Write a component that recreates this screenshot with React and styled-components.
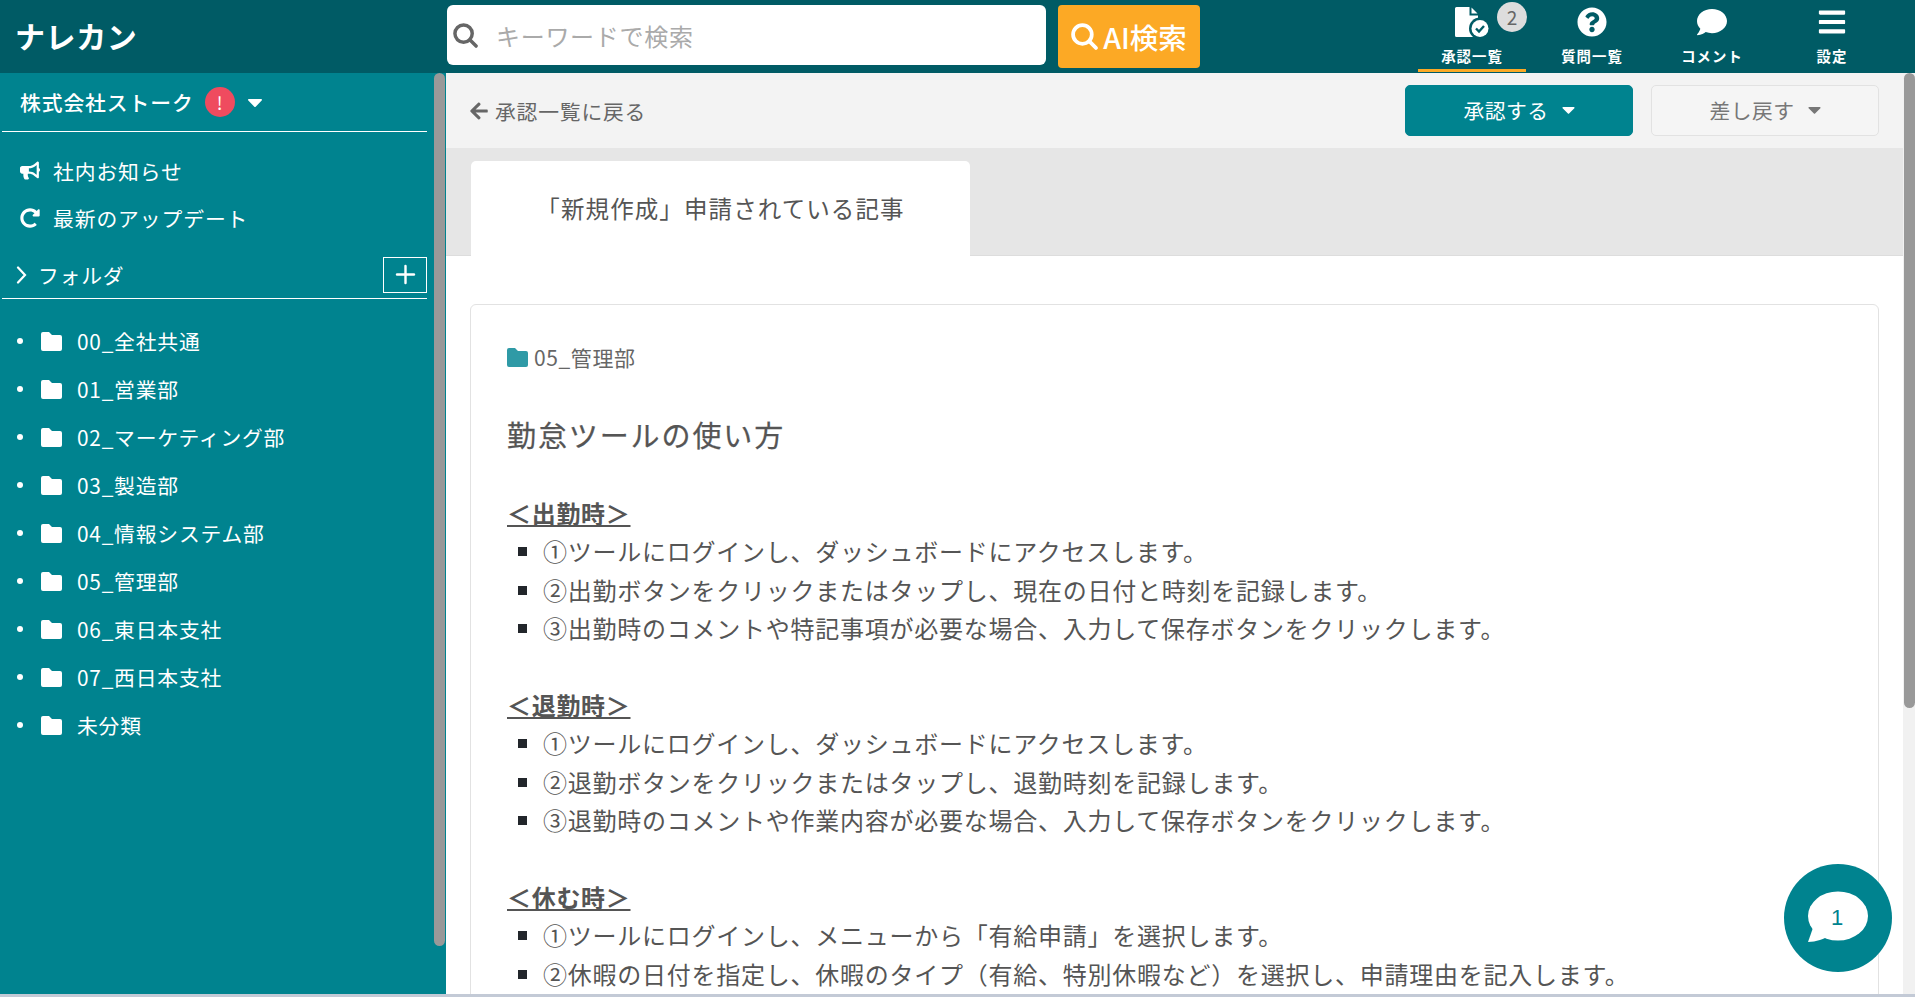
import React from 'react';
import styled, { createGlobalStyle } from 'styled-components';
import { FaBullhorn, FaRedoAlt, FaCaretDown, FaArrowLeft, FaQuestionCircle, FaComment, FaBars } from 'react-icons/fa';
import { Plus } from 'lucide-react';

const GlobalStyle = createGlobalStyle`
html, body {
  margin: 0;
  height: 100%;
  overflow: hidden;
  background: #c3cad6;
  font-family: "Noto Sans CJK JP", "Noto Sans", sans-serif;
}
* { box-sizing: border-box; }
`;

const Page = styled.div`
display: flex;
flex-flow: column;
height: 994px;
`;

const Header = styled.header`
display: flex;
align-items: center;
height: 73px;
flex-shrink: 0;
background: #005b65;
color: white;
`;
const Logo = styled.div`
width: 447px;
padding: 0 0 3px 15px;
font-size: 30px;
font-weight: 700;
letter-spacing: 0.6px;
`;
const SearchBox = styled.div`
display: flex;
align-items: center;
width: 599px;
height: 60px;
margin-bottom: 3px;
padding-left: 6px;
background: white;
border-radius: 6px;
color: #666;
`;
const Placeholder = styled.span`
margin-left: 18px;
font-size: 24px;
letter-spacing: 0.7px;
color: #aaa;
`;
const AiButton = styled.div`
display: flex;
align-items: center;
justify-content: center;
gap: 5px;
width: 142px;
height: 63px;
margin: 0 0 1px 12px;
background: #fca925;
border-radius: 4px;
font-size: 28.5px;
font-weight: 500;
`;
const Nav = styled.nav`
display: flex;
margin-left: 212px;
`;
const NavItem = styled.div`
position: relative;
display: flex;
flex-flow: column;
align-items: center;
width: 120px;
height: 73px;
padding-top: 7px;
`;
const NavIcon = styled.div`
display: flex;
align-items: center;
justify-content: center;
height: 30px;
`;
const NavLabel = styled.span`
margin-top: 7px;
font-size: 14.4px;
line-height: 24px;
font-weight: 700;
letter-spacing: 1px;
`;
const NavUnderline = styled.div`
position: absolute;
left: 6px;
right: 6px;
bottom: 1px;
height: 3px;
background: #fca925;
`;
const Badge = styled.span`
position: absolute;
top: 2px;
left: 85px;
width: 30px;
height: 30px;
border-radius: 50%;
background: #ddd;
color: #666;
font-size: 19px;
line-height: 30px;
text-align: center;
`;

const Body = styled.div`
display: flex;
flex: 1;
min-height: 0;
`;
const Sidebar = styled.aside`
position: relative;
width: 446px;
flex-shrink: 0;
padding-left: 2px;
background: #00838f;
color: white;
font-size: 20.8px;
letter-spacing: 0.8px;
`;
const SideThumb = styled.div`
position: absolute;
top: 0;
right: 1px;
width: 11px;
height: 873px;
border-radius: 6px;
background: #999;
`;
const Company = styled.div`
display: flex;
align-items: center;
width: 425px;
height: 59px;
padding-left: 18px;
border-bottom: 1px solid white;
font-weight: 500;
letter-spacing: 0.9px;
`;
const Alert = styled.span`
display: flex;
align-items: center;
justify-content: center;
width: 30px;
height: 30px;
margin-left: 11px;
border-radius: 50%;
background: #ef4b5f;
font-size: 18px;
font-weight: 400;
letter-spacing: 0;
`;
const CompanyCaret = styled(FaCaretDown)`
margin-left: 8px;
font-size: 24px;
`;
const Links = styled.div`
padding-top: 15px;
`;
const LinkRow = styled.div`
display: flex;
align-items: center;
gap: 13px;
height: 47px;
padding-left: 18px;
letter-spacing: 0.9px;
`;
const LinkIcon = styled.span`
display: flex;
align-items: center;
justify-content: center;
width: 20px;
`;
const FolderHead = styled.div`
display: flex;
align-items: center;
width: 425px;
height: 58px;
padding: 10px 0 0 13px;
border-bottom: 1px solid white;
`;
const FolderTitle = styled.span`
flex: 1;
margin-left: 11px;
`;
const AddBox = styled.div`
display: flex;
align-items: center;
justify-content: center;
width: 44px;
height: 36px;
border: 1px solid white;
`;
const FolderList = styled.ul`
list-style: none;
margin: 18px 0 0;
padding: 0;
`;
const FolderItem = styled.li`
display: flex;
align-items: center;
height: 48px;
padding-left: 15px;
`;
const Dot = styled.span`
width: 6px;
height: 6px;
margin-right: 18px;
border-radius: 50%;
background: white;
`;
const FolderLabel = styled.span`
margin-left: 15px;
`;

const Main = styled.main`
position: relative;
flex: 1;
min-width: 0;
overflow: hidden;
background: white;
`;
const Toolbar = styled.div`
display: flex;
align-items: center;
height: 75px;
padding: 0 36px 0 23px;
background: #f3f3f3;
`;
const BackLink = styled.div`
display: flex;
align-items: center;
gap: 6px;
flex: 1;
color: #666;
font-size: 20.8px;
letter-spacing: 0.8px;
`;
const ActionButton = styled.div`
display: flex;
align-items: center;
justify-content: center;
gap: 10px;
width: 228px;
height: 51px;
margin-left: 18px;
padding: 0 0 2px 5px;
border-radius: 5px;
font-size: 20.8px;
letter-spacing: 0.4px;
background: ${p => (p.$primary ? '#00838f' : '#f5f5f5')};
color: ${p => (p.$primary ? 'white' : '#777')};
border: 1px solid ${p => (p.$primary ? '#00838f' : '#e2e2e2')};
`;
const TabBand = styled.div`
display: flex;
align-items: flex-end;
height: 108px;
padding-left: 25px;
background: #e6e6e6;
border-bottom: 1px solid #ddd;
`;
const Tab = styled.div`
display: flex;
align-items: center;
justify-content: center;
width: 499px;
height: 95px;
margin-bottom: -1px;
padding-bottom: 2px;
background: white;
border-radius: 5px 5px 0 0;
color: #555;
font-size: 23.5px;
letter-spacing: 1.1px;
`;
const Card = styled.article`
height: 900px;
margin: 48px 36px 0 24px;
padding: 37px 36px;
border: 1px solid #e2e2e2;
border-radius: 6px;
color: #555;
font-size: 24px;
line-height: 38.4px;
letter-spacing: 0.75px;
`;
const Crumb = styled.div`
display: flex;
align-items: center;
gap: 6px;
color: #666;
font-size: 21px;
line-height: 30px;
letter-spacing: 0.6px;
`;
const Title = styled.h1`
margin: 38px 0 36px;
font-size: 29px;
font-weight: 400;
line-height: 48px;
letter-spacing: 1.9px;
-webkit-text-stroke: 0.25px #555;
`;
const Section = styled.section`
margin-bottom: 38.4px;
`;
const SectionHead = styled.div`
font-weight: 700;
letter-spacing: 0.7px;
text-decoration: underline;
`;
const Steps = styled.ul`
list-style: none;
margin: 0;
padding: 0;
`;
const Step = styled.li`
display: flex;
align-items: center;
padding-left: 11px;
white-space: nowrap;
&::before {
  content: "";
  width: 9px;
  height: 9px;
  margin-right: 16px;
  flex-shrink: 0;
  background: #22262b;
}
`;
const PageThumb = styled.div`
position: absolute;
top: 0;
right: 0;
bottom: 0;
width: 12px;
background: #f1f1f1;
&::after {
  content: "";
  display: block;
  width: 11px;
  margin-left: 1px;
  height: 635px;
  border-radius: 6px;
  background: #999;
}
`;
const ChatFab = styled.div`
position: absolute;
right: 23px;
bottom: 22px;
display: flex;
align-items: center;
justify-content: center;
width: 108px;
height: 108px;
border-radius: 50%;
background: #00838f;
`;
const ChatCount = styled.span`
position: absolute;
top: 34px;
left: 0;
right: 2px;
text-align: center;
color: #00838f;
font-family: "Liberation Sans", sans-serif;
font-size: 22px;
line-height: 40px;
`;

const SearchIcon = ({ size }) => (
  <svg width={size} height={size} viewBox="0 0 26 26" fill="none" stroke="currentColor" strokeWidth="3.6" strokeLinecap="round">
    <circle cx="11" cy="11" r="9" />
    <path d="M17.5 17.5L24 24" />
  </svg>
);

const ChevronIcon = () => (
  <svg width="12" height="18" viewBox="0 0 12 18" fill="none" stroke="white" strokeWidth="2.2" strokeLinecap="round">
    <path d="M3 1.5L10 9L3 16.5" />
  </svg>
);

const FolderIcon = ({ color = 'white' }) => (
  <svg width="21" height="19" viewBox="0 0 21 19" fill={color}>
    <path d="M2 0H8L11 3H19A2 2 0 0 1 21 5V17A2 2 0 0 1 19 19H2A2 2 0 0 1 0 17V2A2 2 0 0 1 2 0Z" />
  </svg>
);

const ApprovalIcon = () => (
  <svg width="34" height="30" viewBox="0 0 34 30">
    <path fill="white" d="M1.5 0H14.5V8.5H23V30H1.5A1.5 1.5 0 0 1 0 28.5V1.5A1.5 1.5 0 0 1 1.5 0Z" />
    <path fill="white" d="M16.5 0.5L22.5 6.5H16.5Z" />
    <circle cx="25" cy="21.5" r="11" fill="#005b65" />
    <circle cx="25" cy="21.5" r="8.5" fill="white" />
    <path d="M21 21.5L24 24.5L29 19" fill="none" stroke="#005b65" strokeWidth="2.4" />
  </svg>
);

const BubbleIcon = () => (
  <svg width="62" height="54" viewBox="0 0 62 54" fill="white">
    <ellipse cx="31" cy="25" rx="30" ry="24.5" />
    <path d="M7 34L1 51C9 51 17 48 24 44Z" />
  </svg>
);

const folders = ['00_全社共通', '01_営業部', '02_マーケティング部', '03_製造部', '04_情報システム部', '05_管理部', '06_東日本支社', '07_西日本支社', '未分類'];

const sections = [
  {
    head: '＜出勤時＞',
    steps: [
      '①ツールにログインし、ダッシュボードにアクセスします。',
      '②出勤ボタンをクリックまたはタップし、現在の日付と時刻を記録します。',
      '③出勤時のコメントや特記事項が必要な場合、入力して保存ボタンをクリックします。',
    ],
  },
  {
    head: '＜退勤時＞',
    steps: [
      '①ツールにログインし、ダッシュボードにアクセスします。',
      '②退勤ボタンをクリックまたはタップし、退勤時刻を記録します。',
      '③退勤時のコメントや作業内容が必要な場合、入力して保存ボタンをクリックします。',
    ],
  },
  {
    head: '＜休む時＞',
    steps: [
      '①ツールにログインし、メニューから「有給申請」を選択します。',
      '②休暇の日付を指定し、休暇のタイプ（有給、特別休暇など）を選択し、申請理由を記入します。',
    ],
  },
];

const App = () => (
  <Page>
    <GlobalStyle />
    <Header>
      <Logo>ナレカン</Logo>
      <SearchBox>
        <SearchIcon size={25} />
        <Placeholder>キーワードで検索</Placeholder>
      </SearchBox>
      <AiButton>
        <SearchIcon size={27} />
        AI検索
      </AiButton>
      <Nav>
        <NavItem>
          <NavIcon><ApprovalIcon /></NavIcon>
          <NavLabel>承認一覧</NavLabel>
          <Badge>2</Badge>
          <NavUnderline />
        </NavItem>
        <NavItem>
          <NavIcon><FaQuestionCircle size={30} /></NavIcon>
          <NavLabel>質問一覧</NavLabel>
        </NavItem>
        <NavItem>
          <NavIcon><FaComment size={30} /></NavIcon>
          <NavLabel>コメント</NavLabel>
        </NavItem>
        <NavItem>
          <NavIcon><FaBars size={30} /></NavIcon>
          <NavLabel>設定</NavLabel>
        </NavItem>
      </Nav>
    </Header>
    <Body>
      <Sidebar>
        <Company>
          株式会社ストーク
          <Alert>!</Alert>
          <CompanyCaret />
        </Company>
        <Links>
          <LinkRow>
            <LinkIcon><FaBullhorn size={23} /></LinkIcon>
            社内お知らせ
          </LinkRow>
          <LinkRow>
            <LinkIcon><FaRedoAlt size={20} /></LinkIcon>
            最新のアップデート
          </LinkRow>
        </Links>
        <FolderHead>
          <ChevronIcon />
          <FolderTitle>フォルダ</FolderTitle>
          <AddBox><Plus size={29} strokeWidth={2} /></AddBox>
        </FolderHead>
        <FolderList>
          {folders.map(name => (
            <FolderItem key={name}>
              <Dot />
              <FolderIcon />
              <FolderLabel>{name}</FolderLabel>
            </FolderItem>
          ))}
        </FolderList>
        <SideThumb />
      </Sidebar>
      <Main>
        <Toolbar>
          <BackLink>
            <FaArrowLeft size={20} />
            承認一覧に戻る
          </BackLink>
          <ActionButton $primary>承認する<FaCaretDown size={21} /></ActionButton>
          <ActionButton>差し戻す<FaCaretDown size={21} /></ActionButton>
        </Toolbar>
        <TabBand>
          <Tab>「新規作成」申請されている記事</Tab>
        </TabBand>
        <Card>
          <Crumb><FolderIcon color="#2f9aa6" />05_管理部</Crumb>
          <Title>勤怠ツールの使い方</Title>
          {sections.map(section => (
            <Section key={section.head}>
              <SectionHead>{section.head}</SectionHead>
              <Steps>
                {section.steps.map(step => <Step key={step}>{step}</Step>)}
              </Steps>
            </Section>
          ))}
        </Card>
        <PageThumb />
        <ChatFab>
          <BubbleIcon />
          <ChatCount>1</ChatCount>
        </ChatFab>
      </Main>
    </Body>
  </Page>
);

export default App;
